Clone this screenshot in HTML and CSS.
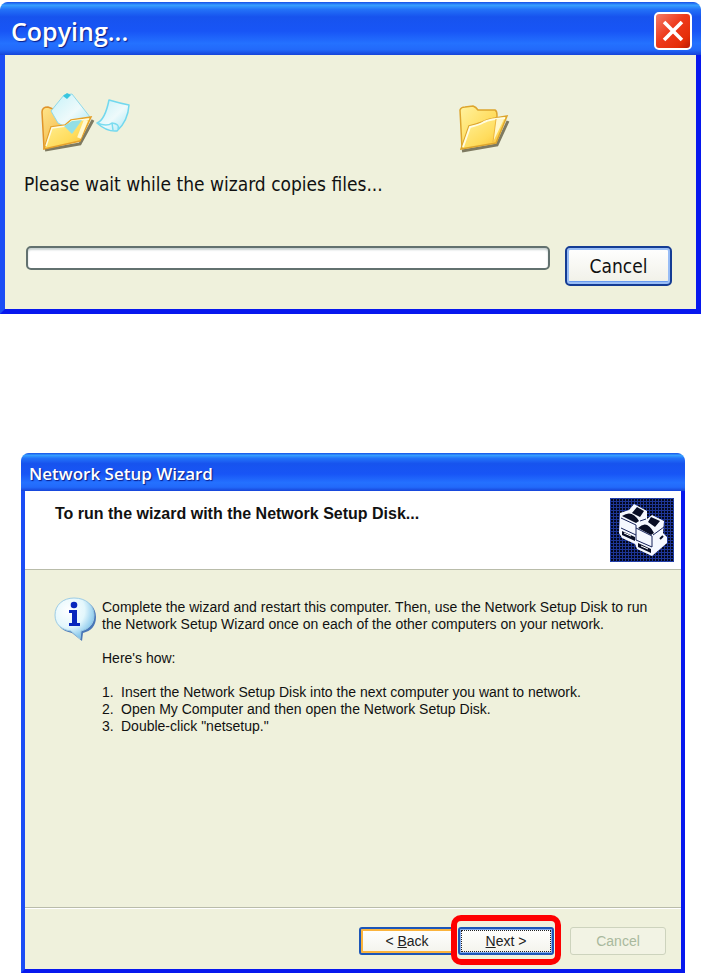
FILE: index.html
```html
<!DOCTYPE html>
<html lang="en">
<head>
<meta charset="utf-8">
<meta name="viewport" content="width=device-width, initial-scale=1">
<title>Network Setup Wizard</title>
<link rel="stylesheet" href="styles.css">
</head>
<body>
<main class="page">
  <section class="window copy-window" aria-labelledby="copy-title">
    <header class="titlebar titlebar-large">
      <h1 class="window-title" id="copy-title">Copying...</h1>
      <button class="close" type="button" aria-label="Close">
        <svg viewBox="0 0 38 38" aria-hidden="true"><path d="M9 9L29 29M29 9L9 29"/></svg>
      </button>
    </header>
    <div class="copy-body">
      <div class="files">
        <svg class="source-icon" viewBox="0 0 96 62" aria-hidden="true">
          <defs>
            <linearGradient id="gold" x1="0" y1="0" x2="1" y2="1"><stop offset="0" stop-color="#fff3a0"/><stop offset=".6" stop-color="#ffdc5c"/><stop offset="1" stop-color="#f6b52c"/></linearGradient>
            <linearGradient id="back" x1="0" y1="0" x2="1" y2="1"><stop offset="0" stop-color="#ffe58a"/><stop offset="1" stop-color="#eda530"/></linearGradient>
            <linearGradient id="sheet" x1="0" y1="0" x2="1" y2="1"><stop offset="0" stop-color="#c4f1f8"/><stop offset=".55" stop-color="#eefafb"/><stop offset="1" stop-color="#a5e6f5"/></linearGradient>
          </defs>
          <path d="M5 58L40 52 53 28" fill="none" stroke="#7e7a61" stroke-width="3"/>
          <path d="M2 20Q2 15 8 15L13 17 42 24 40 48 4 56Z" fill="url(#back)" stroke="#e0942a" stroke-width="1.5"/>
          <path d="M11 19L24 3 32 2 50 25 31 38 18 31Z" fill="url(#sheet)" stroke="#8ed9ea" stroke-width="1"/>
          <path d="M23 4L27 1 31 3 27 7Z" fill="#38c6de"/>
          <path d="M4 57L11 35 25 33 31 28 51 25 40 49Z" fill="url(#gold)" stroke="#e5a12b" stroke-width="1.5"/>
          <path d="M6 54L12 36 26 34 32 29 49 27" fill="none" stroke="#fffbe0" stroke-width="1.5"/>
          <path d="M24 34L32 29 42 28 32 42Z" fill="#93dfe5"/>
          <path d="M46 28L39 46" stroke="#fff8cf" stroke-width="4"/>
          <path d="M69 8Q79 11 89 13Q88 29 77 39Q67 40 57 31Q65 28 69 8Z" fill="url(#sheet)" stroke="#72d8ee" stroke-width="1.5" stroke-linejoin="round"/>
          <path d="M57 31Q67 35 72 31Q80 32 78 37M72 31L73 38" fill="none" stroke="#7adcf0" stroke-width="1.5"/>
        </svg>
        <svg class="target-icon" viewBox="0 0 54 50" aria-hidden="true">
          <path d="M5 47L40 41 51 17" fill="none" stroke="#7e7a61" stroke-width="3"/>
          <path d="M3 6Q4 3 8 3L16 2Q19 3 21 6L38 6Q40 7 40 11L39 37 5 44Z" fill="url(#gold)" stroke="#dda52d" stroke-width="1.5"/>
          <path d="M4 45L12 22Q20 20 25 18Q31 15 38 14L50 12 39 39Z" fill="url(#gold)" stroke="#dda52d" stroke-width="1.5"/>
          <path d="M6 43L13 23Q22 21 27 18Q33 15 48 14" fill="none" stroke="#fffde1" stroke-width="2"/>
          <path d="M39 15L36 38 47 15Z" fill="#fff7ca"/><path d="M39 15L36 38" stroke="#edb63c"/>
        </svg>
      </div>
      <label class="copy-label" for="copy-progress">Please wait while the wizard copies files...</label>
      <div class="copy-actions">
        <progress class="progress" id="copy-progress" value="0" max="100"></progress>
        <button class="copy-cancel" type="button">Cancel</button>
      </div>
    </div>
  </section>

  <section class="window wizard" aria-labelledby="wizard-title">
    <header class="titlebar">
      <h1 class="window-title" id="wizard-title">Network Setup Wizard</h1>
    </header>
    <div class="wizard-head">
      <h2 class="wizard-heading">To run the wizard with the Network Setup Disk...</h2>
      <svg class="network-icon" viewBox="0 0 64 64" aria-hidden="true">
        <defs><pattern id="dither" width="3" height="3" patternUnits="userSpaceOnUse"><rect width="3" height="3" fill="#03071c"/><path d="M0 .5H3M.5 0V3" stroke="#1d3594"/></pattern></defs>
        <rect width="64" height="64" fill="url(#dither)"/>
        <rect x=".5" y=".5" width="63" height="63" fill="none" stroke="#2444b4" stroke-dasharray="2 1"/>
        <path d="M10 15L19 12 24 6 37 13 37 21 42 17 54 23 53 35 57 39 57 45 42 58 27 51 25 46 12 40 9 35Z" fill="#f5f8ff"/>
        <path d="M22 15L27 9 34 13 30 19ZM38 24L41 19 50 23 45 29ZM12 18Q22 11 29 23L26 25ZM28 30Q37 21 44 35L41 37Z" fill="#080d25"/>
        <path d="M11 20L26 27V30L42 38V49L26 42V30M11 30L26 37M43 37L54 29M30 23L36 21" fill="none" stroke="#17235a"/>
        <path d="M12 33L25 39V43L12 37ZM28 45L41 51V55L28 49Z" fill="#080d25"/>
        <path d="M14 35L21 38M31 48L38 51" stroke="#fff"/><path d="M50 41L53 38" stroke="#080d25" stroke-width="2"/>
      </svg>
    </div>
    <div class="wizard-body">
      <svg class="info-icon" viewBox="0 0 44 46" aria-hidden="true">
        <defs><radialGradient id="bubble" cx=".35" cy=".3" r=".75"><stop offset="0" stop-color="#fff"/><stop offset=".55" stop-color="#e3f7fc"/><stop offset="1" stop-color="#74bee9"/></radialGradient></defs>
        <path d="M22 3C35 3 42 10 42 20C42 29 37 34 29 36L28 44 18 36C8 34 3 29 3 20C3 10 10 3 22 3Z" fill="#2d62b0" opacity=".85"/>
        <path d="M20 1C32 1 40 8 40 18C40 27 35 32 27 34L26 42 17 34C7 33 1 27 1 18C1 8 9 1 20 1Z" fill="url(#bubble)" stroke="#9dcce5"/>
        <circle cx="20" cy="8" r="3.3" fill="#0827bd"/><path d="M15 13H23V26H26V29H15V26H18V16H15Z" fill="#0827bd"/>
      </svg>
      <div class="instructions">
        <p>Complete the wizard and restart this computer. Then, use the Network Setup Disk to run the Network Setup Wizard once on each of the other computers on your network.</p>
        <p>Here's how:</p>
        <ol>
          <li>Insert the Network Setup Disk into the next computer you want to network.</li>
          <li>Open My Computer and then open the Network Setup Disk.</li>
          <li>Double-click "netsetup."</li>
        </ol>
      </div>
    </div>
    <footer class="wizard-footer">
      <button class="wizard-button back" type="button">&lt; <u>B</u>ack</button>
      <div class="next-wrap"><button class="wizard-button next" type="button"><u>N</u>ext &gt;</button></div>
      <button class="wizard-button cancel" type="button" disabled>Cancel</button>
    </footer>
  </section>
</main>
</body>
</html>
```
FILE: styles.css
```css
* { box-sizing: border-box; }
body { margin: 0; background: #fff; color: #111; }
h1, h2, p, ol { margin: 0; }
button { font: inherit; }

.page { padding: 2px 2px 0 0; }
.window {
  border: solid #0718ee;
  border-width: 0 5px 5px;
  border-left-color: #1b4df5;
  border-radius: 10px 10px 0 0;
  background: #eff1dc;
}
.titlebar {
  display: flex;
  align-items: center;
  justify-content: space-between;
  height: 38px;
  margin: 0 -5px;
  padding: 4px 8px 0;
  border-radius: 8px 8px 0 0;
  background: linear-gradient(#164fe8 0, #37a0ff 6%, #2372f8 14%, #1753ee 28%, #1855f6 55%, #2471ff 78%, #2269fa 90%, #1644d8 100%);
}
.titlebar-large { height: 53px; padding: 4px 9px 0 11px; }
.window-title {
  color: #fff;
  font: 600 17px/24px "Open Sans", sans-serif;
  text-shadow: 1px 1px 1px #0a1c86;
}
.titlebar-large .window-title { font-size: 25px; line-height: 32px; }
.close {
  width: 38px;
  height: 38px;
  padding: 0;
  border: 2px solid #fff;
  border-radius: 5px;
  background: linear-gradient(135deg, #f27c69, #ee3a1c 45%, #e52d08 80%, #b81c08);
}
.close svg { display: block; width: 34px; height: 34px; }
.close path { stroke: #fff; stroke-width: 4; fill: none; }

.copy-body {
  padding: 37px 24px 23px 19px;
  font: 19px/24px "DejaVu Sans Condensed", "DejaVu Sans", sans-serif;
}
.files {
  display: flex;
  align-items: flex-end;
  justify-content: space-between;
  padding: 0 161px 0 16px;
}
.source-icon { width: 96px; height: 62px; }
.target-icon { width: 54px; height: 50px; }
.copy-label { display: block; margin: 18px 0 50px; }
.copy-actions { display: flex; gap: 15px; }
.progress {
  appearance: none;
  flex: 1;
  min-width: 0;
  height: 24px;
  margin-left: 2px;
  border: 2px solid #62716f;
  border-radius: 5px;
  background: #fff;
  box-shadow: inset 0 2px 2px #c9d2d2;
}
.progress::-webkit-progress-bar { background: transparent; }
.copy-cancel {
  width: 107px;
  height: 40px;
  padding: 0;
  border: 2px solid #143c94;
  border-radius: 5px;
  background: linear-gradient(#fff, #f0f0e7);
  box-shadow: inset 0 0 0 2px #98bdf6, inset 0 -3px #6b9cf0;
  color: #111;
}

.wizard {
  margin: 139px 16px 0 21px;
  border-width: 0 4px 4px;
  font: 14px/17px "Liberation Sans", sans-serif;
}
.wizard .titlebar { margin: 0 -4px; }
.wizard-head {
  display: flex;
  justify-content: space-between;
  padding: 7px 7px 7px 30px;
  border-bottom: 1px solid #b9bcaa;
  background: #fff;
}
.wizard-heading { padding-top: 7px; font-size: 16px; line-height: 17px; }
.network-icon { flex: none; width: 64px; height: 64px; }
.wizard-body {
  display: flex;
  gap: 4px;
  min-height: 337px;
  padding: 29px 24px 0 29px;
}
.info-icon { flex: none; width: 44px; height: 46px; margin-top: -2px; }
.instructions { display: grid; gap: 17px; align-content: start; }
.instructions ol { padding: 0; list-style: none; counter-reset: step; }
.instructions li { display: flex; counter-increment: step; }
.instructions li::before { content: counter(step) "."; flex: none; width: 19px; }
.wizard-footer {
  display: flex;
  justify-content: flex-end;
  padding: 19px 15px 14px;
  border-top: 1px solid #b9bcaa;
  box-shadow: inset 0 1px #fff;
}
.wizard-button {
  width: 96px;
  height: 28px;
  padding: 0;
  border: 2px solid #1c56b8;
  border-radius: 3px;
  background: linear-gradient(#fff, #f3f3ec);
  color: #222;
}
.back { margin-right: 3px; box-shadow: inset 0 0 0 2px #fbb43d; }
.next-wrap { position: relative; margin-right: 16px; }
.next-wrap::after {
  content: "";
  position: absolute;
  inset: -12px -7px -10px;
  border: 6px solid #fe0000;
  border-radius: 10px;
  pointer-events: none;
}
.next { box-shadow: inset 0 0 0 1px #87aef0; outline: 1px dotted #222; outline-offset: -4px; }
.cancel { border: 1px solid #cdd3bd; background: #f2f3e4; color: #a9b99d; }
```
